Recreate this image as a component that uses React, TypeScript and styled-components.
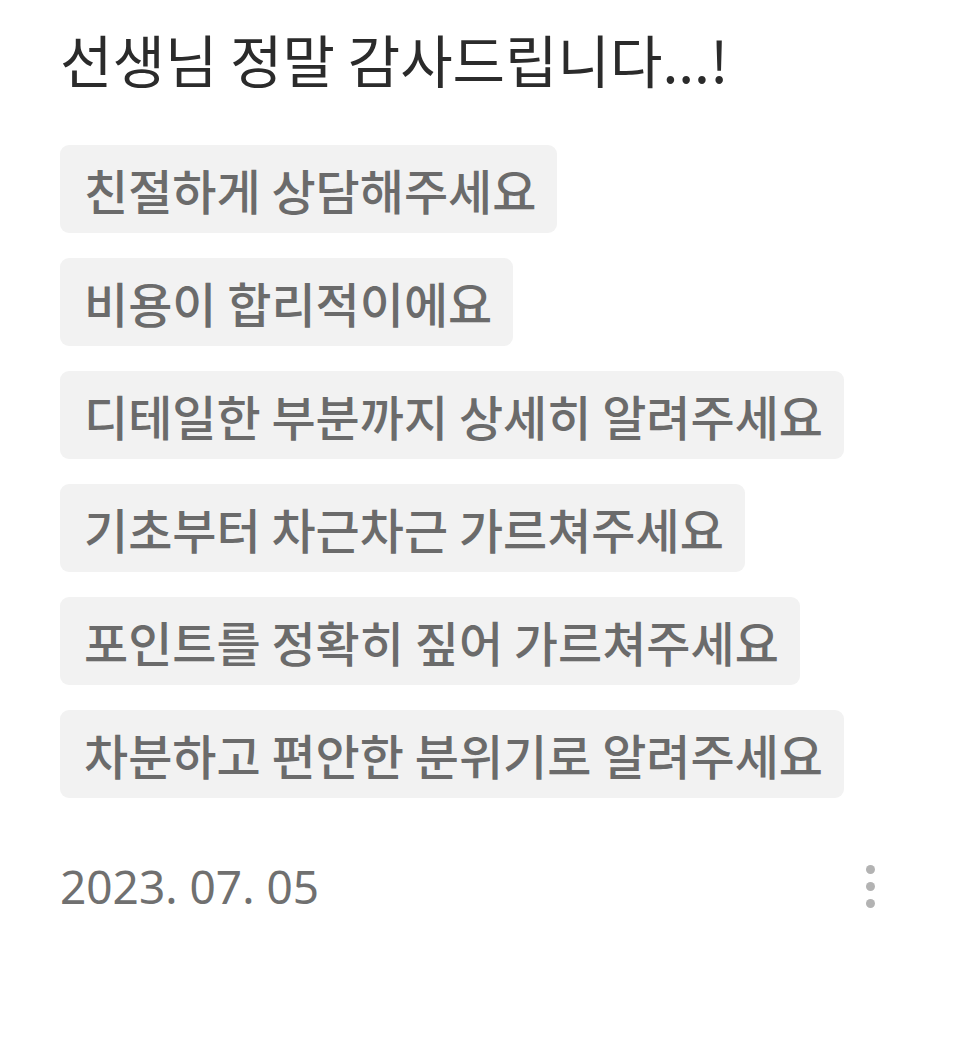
import React from 'react'
import styled, { createGlobalStyle } from 'styled-components'

const GlobalStyle = createGlobalStyle`
  html, body {
    margin: 0;
    padding: 0;
    background: #fff;
  }
  body {
    font-family: "Noto Sans CJK KR", "Noto Sans", sans-serif;
  }
`

const tags = [
  '친절하게 상담해주세요',
  '비용이 합리적이에요',
  '디테일한 부분까지 상세히 알려주세요',
  '기초부터 차근차근 가르쳐주세요',
  '포인트를 정확히 짚어 가르쳐주세요',
  '차분하고 편안한 분위기로 알려주세요',
]

export default function App() {
  return (
    <>
      <GlobalStyle />
      <ReviewCard>
        <Title>선생님 정말 감사드립니다...!</Title>
        <TagList>
          {tags.map((t) => (
            <Tag key={t}>{t}</Tag>
          ))}
        </TagList>
        <Footer>
          <DateText>2023. 07. 05</DateText>
          <MoreButton aria-label="more">
            <Dot />
            <Dot />
            <Dot />
          </MoreButton>
        </Footer>
      </ReviewCard>
    </>
  )
}

const ReviewCard = styled.article`
  display: flex;
  flex-direction: column;
  padding: 22px 85px 40px 60px;
`

const Title = styled.h2`
  margin: 0;
  font-size: 57px;
  font-weight: 400;
  line-height: 72px;
  color: #2b2b2b;
`

const TagList = styled.ul`
  list-style: none;
  margin: 51px 0 0;
  padding: 0;
  display: flex;
  flex-direction: column;
  align-items: flex-start;
  gap: 25px;
`

const Tag = styled.li`
  display: inline-flex;
  align-items: center;
  height: 88px;
  padding: 0 21px 0 24px;
  border-radius: 9px;
  background: #f2f2f2;
  color: #6b6b6b;
  font-size: 48px;
  font-weight: 500;
  white-space: nowrap;
`

const Footer = styled.div`
  display: flex;
  align-items: center;
  justify-content: space-between;
  height: 60px;
  margin-top: 58px;
`

const DateText = styled.span`
  font-family: "Noto Sans", "Noto Sans CJK KR", sans-serif;
  font-size: 46px;
  color: #707070;
`

const MoreButton = styled.button`
  display: flex;
  flex-direction: column;
  align-items: center;
  gap: 8px;
  padding: 0;
  border: 0;
  background: none;
`

const Dot = styled.span`
  width: 9px;
  height: 9px;
  border-radius: 50%;
  background: #b3b3b3;
`
